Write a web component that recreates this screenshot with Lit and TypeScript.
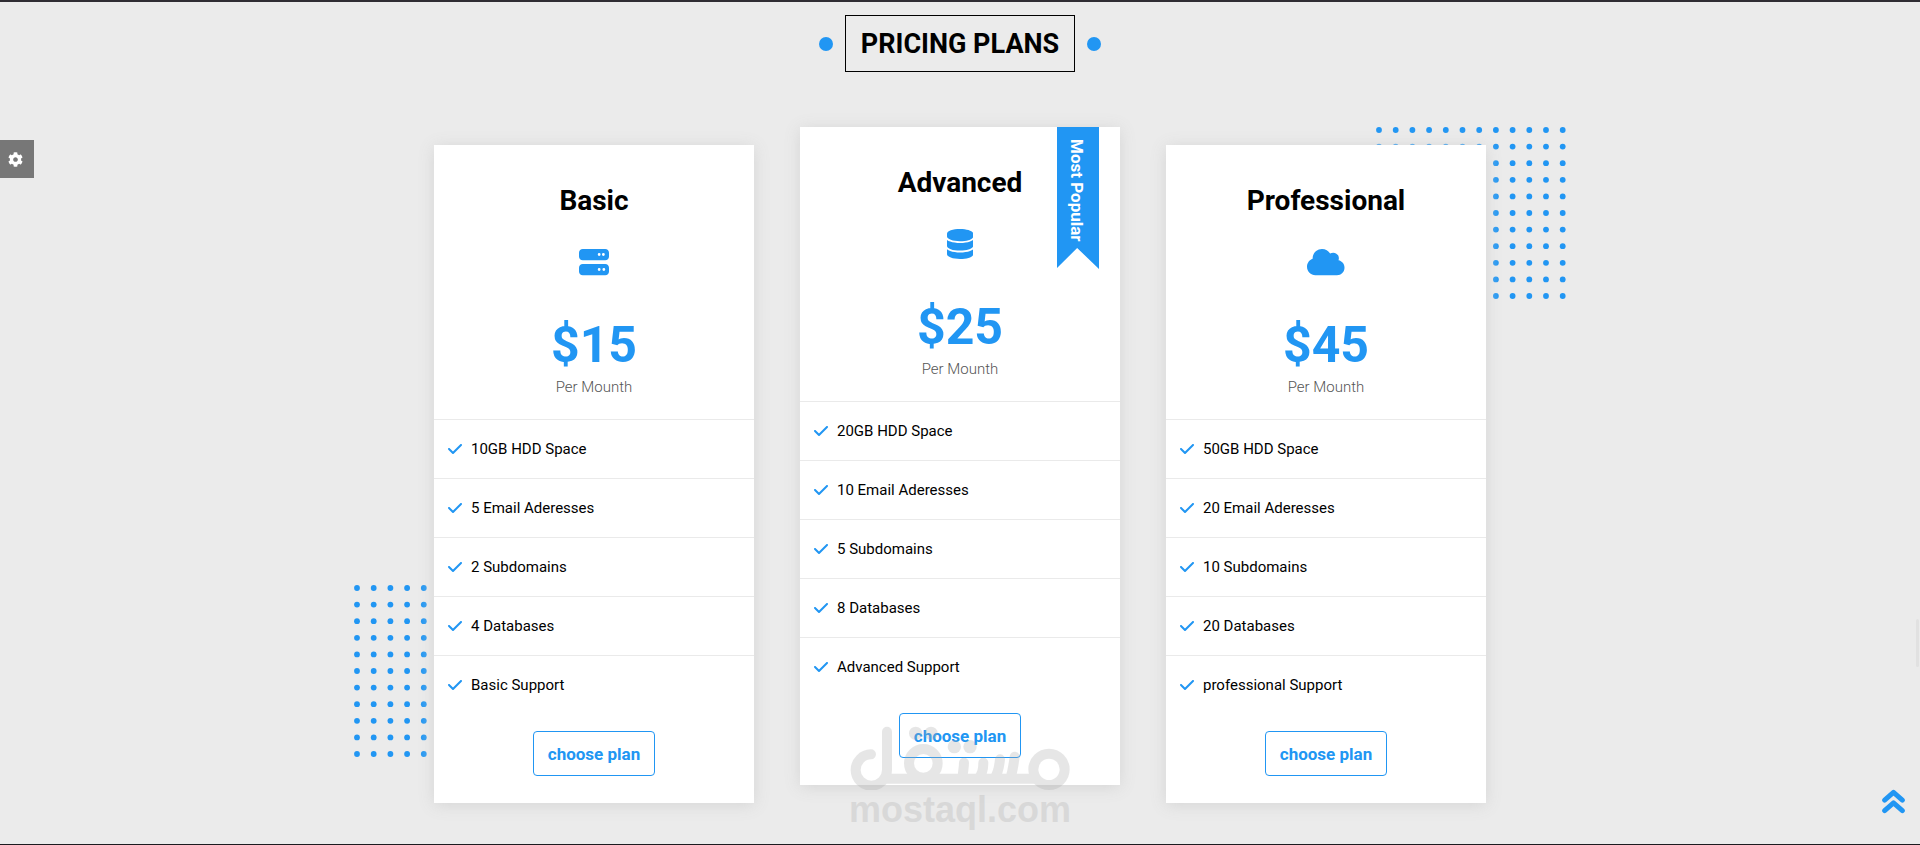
import { LitElement, html, css, svg, nothing } from "lit";
import { customElement, property } from "lit/decorators.js";

interface Plan {
  name: string;
  icon: "server" | "database" | "cloud";
  price: string;
  features: string[];
  popular?: boolean;
}

const ICONS = {
  server: {
    box: "0 0 512 512",
    path: "M64 32C28.7 32 0 60.7 0 96v64c0 35.3 28.7 64 64 64H448c35.3 0 64-28.7 64-64V96c0-35.3-28.7-64-64-64H64zm280 72a24 24 0 1 1 0 48 24 24 0 1 1 0-48zm48 24a24 24 0 1 1 48 0 24 24 0 1 1 -48 0zM64 288c-35.3 0-64 28.7-64 64v64c0 35.3 28.7 64 64 64H448c35.3 0 64-28.7 64-64V352c0-35.3-28.7-64-64-64H64zm280 72a24 24 0 1 1 0 48 24 24 0 1 1 0-48zm56 24a24 24 0 1 1 48 0 24 24 0 1 1 -48 0z",
  },
  database: {
    box: "0 0 448 512",
    path: "M448 80v48c0 44.2-100.3 80-224 80S0 172.2 0 128V80C0 35.8 100.3 0 224 0S448 35.8 448 80zM393.2 214.7c20.8-7.4 39.9-16.9 54.8-28.6V288c0 44.2-100.3 80-224 80S0 332.2 0 288V186.1c14.9 11.8 34 21.2 54.8 28.6C99.7 230.7 159.5 240 224 240s124.3-9.3 169.2-25.3zM0 346.1c14.9 11.8 34 21.2 54.8 28.6C99.7 390.7 159.5 400 224 400s124.3-9.3 169.2-25.3c20.8-7.4 39.9-16.9 54.8-28.6V432c0 44.2-100.3 80-224 80S0 476.2 0 432V346.1z",
  },
  cloud: {
    box: "0 0 640 512",
    path: "M0 336c0 79.5 64.5 144 144 144H512c70.7 0 128-57.3 128-128c0-61.9-44-113.6-102.4-125.4c4.1-10.7 6.4-22.4 6.4-34.6c0-53-43-96-96-96c-19.7 0-38.1 6-53.3 16.2C367 64.2 315.3 32 256 32C167.6 32 96 103.6 96 192c0 2.7 .1 5.4 .2 8.1C40.2 219.8 0 273.2 0 336z",
  },
};

const CHECK =
  "M438.6 105.4c12.5 12.5 12.5 32.8 0 45.3l-256 256c-12.5 12.5-32.8 12.5-45.3 0l-128-128c-12.5-12.5-12.5-32.8 0-45.3s32.8-12.5 45.3 0L160 338.7 393.4 105.4c12.5-12.5 32.8-12.5 45.3 0z";

const GEAR =
  "M487.4 315.7l-42.6-24.6c4.3-23.2 4.3-47 0-70.2l42.6-24.6c4.9-2.8 7.1-8.6 5.5-14-11.1-35.6-30-67.8-54.7-94.6-3.8-4.1-10-5.1-14.8-2.3L380.8 110c-17.9-15.4-38.5-27.3-60.8-35.1V25.8c0-5.6-3.9-10.5-9.4-11.7-36.7-8.2-74.3-7.8-109.2 0-5.5 1.2-9.4 6.1-9.4 11.7V75c-22.2 7.9-42.8 19.8-60.8 35.1L88.7 85.5c-4.9-2.8-11-1.9-14.8 2.3-24.7 26.7-43.6 58.9-54.7 94.6-1.7 5.4.6 11.2 5.5 14L67.3 221c-4.3 23.2-4.3 47 0 70.2l-42.6 24.6c-4.9 2.8-7.1 8.6-5.5 14 11.1 35.6 30 67.8 54.7 94.6 3.8 4.1 10 5.1 14.8 2.3l42.6-24.6c17.9 15.4 38.5 27.3 60.8 35.1v49.2c0 5.6 3.9 10.5 9.4 11.7 36.7 8.2 74.3 7.8 109.2 0 5.5-1.2 9.4-6.1 9.4-11.7v-49.2c22.2-7.9 42.8-19.8 60.8-35.1l42.6 24.6c4.9 2.8 11 1.9 14.8-2.3 24.7-26.7 43.6-58.9 54.7-94.6 1.5-5.5-.7-11.3-5.6-14.1zM256 336c-44.1 0-80-35.9-80-80s35.9-80 80-80 80 35.9 80 80-35.9 80-80 80z";

const PLANS: Plan[] = [
  {
    name: "Basic",
    icon: "server",
    price: "$15",
    features: ["10GB HDD Space", "5 Email Aderesses", "2 Subdomains", "4 Databases", "Basic Support"],
  },
  {
    name: "Advanced",
    icon: "database",
    price: "$25",
    features: ["20GB HDD Space", "10 Email Aderesses", "5 Subdomains", "8 Databases", "Advanced Support"],
    popular: true,
  },
  {
    name: "Professional",
    icon: "cloud",
    price: "$45",
    features: ["50GB HDD Space", "20 Email Aderesses", "10 Subdomains", "20 Databases", "professional Support"],
  },
];

@customElement("plan-card")
export class PlanCard extends LitElement {
  @property({ attribute: false }) plan!: Plan;

  static styles = css`
    :host {
      display: block;
    }
    .card {
      position: relative;
      background: #fff;
      box-shadow: 0 2px 15px #d5d5d5;
      text-align: center;
      padding: 35px 0 27px;
    }
    .name {
      margin: 0 0 25px;
      font-size: 28px;
      line-height: 42px;
      font-weight: 700;
    }
    .icon {
      display: block;
      height: 30px;
      margin: 0 auto 38px;
      fill: #2196f3;
    }
    .price {
      margin: 0;
      font-size: 50px;
      line-height: 60px;
      font-weight: 700;
      color: #2196f3;
    }
    .period {
      margin: 0 0 20px;
      font-size: 15px;
      line-height: 24px;
      font-weight: 300;
      color: #555;
    }
    .features {
      list-style: none;
      margin: 0 0 17px;
      padding: 0;
      text-align: left;
    }
    .feature {
      display: flex;
      align-items: center;
      gap: 9px;
      padding: 0 14px;
      border-top: 1px solid #eaeaea;
      font-size: 15px;
      line-height: 58px;
    }
    .check {
      flex: none;
      width: 14px;
      height: 16px;
      fill: #2196f3;
    }
    .choose {
      height: 45px;
      padding: 0 14px;
      border: 1px solid #2196f3;
      border-radius: 4px;
      background: #fff;
      color: #2196f3;
      font: inherit;
      font-size: 17px;
      font-weight: 700;
      cursor: pointer;
    }
    .ribbon {
      position: absolute;
      top: 0;
      right: 21px;
      width: 42px;
      height: 142px;
      box-sizing: border-box;
      padding: 12px 3px 0 0;
      writing-mode: vertical-rl;
      line-height: 39px;
      text-align: left;
      font-size: 17px;
      font-weight: 700;
      color: #fff;
      background: #2196f3;
      clip-path: polygon(0 0, 100% 0, 100% 100%, 48% 121px, 0 141px);
    }
  `;

  render() {
    const { name, icon, price, features, popular } = this.plan;
    return html`
      <article class="card">
        ${popular ? html`<span class="ribbon">Most Popular</span>` : nothing}
        <h3 class="name">${name}</h3>
        <svg class="icon" viewBox=${ICONS[icon].box} aria-hidden="true">
          <path d=${ICONS[icon].path}></path>
        </svg>
        <p class="price">${price}</p>
        <p class="period">Per Mounth</p>
        <ul class="features">
          ${features.map(
            (text) => html`<li class="feature">
              <svg class="check" viewBox="0 0 448 512" aria-hidden="true"><path d=${CHECK}></path></svg>
              <span>${text}</span>
            </li>`
          )}
        </ul>
        <button class="choose" type="button">choose plan</button>
      </article>
    `;
  }
}

@customElement("app-root")
export class AppRoot extends LitElement {
  static styles = css`
    :host {
      display: block;
      font-family: Roboto, "Noto Sans", sans-serif;
      color: #000;
    }
    .page {
      position: relative;
      isolation: isolate;
      box-sizing: border-box;
      min-height: 100vh;
      padding: 13px 24px 41px;
      border-top: 2px solid #2f2d33;
      border-bottom: 1px solid #1b1b1f;
      background: #ebebeb;
      overflow: hidden;
    }
    .heading {
      display: flex;
      justify-content: center;
      align-items: center;
      gap: 12px;
      margin-bottom: 73px;
    }
    .bullet {
      width: 14px;
      height: 14px;
      border-radius: 50%;
      background: #2196f3;
    }
    .title {
      margin: 0;
      padding: 1px 15px 0;
      border: 1px solid #000;
      font-size: 27px;
      line-height: 54px;
      font-weight: 700;
    }
    .plans {
      position: relative;
      display: grid;
      grid-template-columns: repeat(3, 1fr);
      gap: 46px;
      max-width: 1052px;
      margin: 0 auto;
    }
    .raised {
      margin: -18px 0 18px;
    }
    .dots {
      position: absolute;
      z-index: -1;
      width: 190px;
      height: 173px;
      fill: #2196f3;
    }
    .dots-top {
      top: -18px;
      right: -80px;
    }
    .dots-bottom {
      bottom: 45px;
      left: -80px;
    }
    .settings {
      position: absolute;
      top: 138px;
      left: 0;
      width: 34px;
      height: 38px;
      padding: 0 4px 0 0;
      border: 0;
      background: #777;
      display: flex;
      align-items: center;
      justify-content: center;
      cursor: pointer;
    }
    .gear {
      width: 15px;
      height: 15px;
      fill: #fff;
    }
    .to-top {
      position: absolute;
      right: 15px;
      bottom: 30px;
      display: block;
      width: 23px;
      height: 25px;
    }
    .arrows {
      display: block;
      width: 100%;
      height: 100%;
      fill: none;
      stroke: #2196f3;
    }
    .thumb {
      position: absolute;
      right: 1px;
      bottom: 177px;
      width: 3px;
      height: 48px;
      border-radius: 2px;
      background: #e1e1e1;
    }
    .watermark {
      position: absolute;
      left: 0;
      right: 0;
      bottom: 14px;
      display: flex;
      flex-direction: column;
      align-items: center;
      opacity: 0.28;
      color: #a9a9a9;
      pointer-events: none;
    }
    .mark {
      width: 220px;
      height: 64px;
      fill: none;
      stroke: currentColor;
    }
    .site {
      font-family: "Liberation Sans", sans-serif;
      font-size: 36px;
      line-height: 40px;
      font-weight: 700;
    }
  `;

  private dots(position: string) {
    const cells = Array.from({ length: 132 }, (_, i) => [i % 12, Math.floor(i / 12)]);
    return html`<svg class="dots ${position}" viewBox="0 0 190 173" aria-hidden="true">
      ${cells.map(([x, y]) => svg`<circle cx=${3 + x * 16.7} cy=${3 + y * 16.6} r="2.9"></circle>`)}
    </svg>`;
  }

  render() {
    return html`
      <main class="page">
        <header class="heading">
          <span class="bullet"></span>
          <h2 class="title">PRICING PLANS</h2>
          <span class="bullet"></span>
        </header>

        <section class="plans" aria-label="Pricing plans">
          ${this.dots("dots-top")} ${this.dots("dots-bottom")}
          ${PLANS.map(
            (plan) => html`<plan-card class=${plan.popular ? "raised" : ""} .plan=${plan}></plan-card>`
          )}
        </section>

        <button class="settings" type="button" aria-label="Settings">
          <svg class="gear" viewBox="0 0 512 512" aria-hidden="true"><path d=${GEAR}></path></svg>
        </button>

        <span class="thumb"></span>

        <a class="to-top" href="#top" aria-label="Back to top">
          <svg class="arrows" viewBox="0 0 70 74" stroke-width="15" aria-hidden="true">
            <path stroke-linecap="round" stroke-linejoin="round" d="M8 33 35 9 62 33M8 65 35 41 62 65"></path>
          </svg>
        </a>

        <div class="watermark" aria-hidden="true">
          <svg class="mark" viewBox="180 980 660 192" stroke-width="30">
            <path
              stroke-linecap="round"
              d="M243 1065A47 47 0 1 0 291 1112V997M291 1138H735M520 1138C515 1130 522 1110 522 1090M563 1138C574 1130 580 1112 580 1090M612 1138C624 1124 628 1100 630 1080M660 1138C668 1120 671 1092 674 1072"
            ></path>
            <circle cx="400" cy="1092" r="43"></circle>
            <circle cx="777" cy="1110" r="47"></circle>
            <g fill="currentColor" stroke="none">
              <circle cx="377" cy="1002" r="20"></circle>
              <circle cx="423" cy="1002" r="20"></circle>
              <circle cx="493" cy="1042" r="20"></circle>
              <circle cx="540" cy="1042" r="20"></circle>
            </g>
          </svg>
          <span class="site">mostaql.com</span>
        </div>
      </main>
    `;
  }
}
